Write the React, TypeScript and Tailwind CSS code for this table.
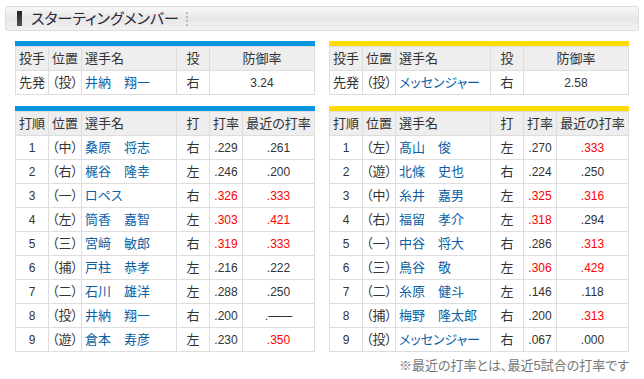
import React from "react";

type Batter = {
  order: number;
  pos: string;
  name: string;
  hand: string;
  avg: string;
  avgHot: boolean;
  recent: string;
  recentHot: boolean;
};

const baystars: Batter[] = [
  { order: 1, pos: "（中）", name: "桑原　将志", hand: "右", avg: ".229", avgHot: false, recent: ".261", recentHot: false },
  { order: 2, pos: "（右）", name: "梶谷　隆幸", hand: "左", avg: ".246", avgHot: false, recent: ".200", recentHot: false },
  { order: 3, pos: "（一）", name: "ロペス", hand: "右", avg: ".326", avgHot: true, recent: ".333", recentHot: true },
  { order: 4, pos: "（左）", name: "筒香　嘉智", hand: "左", avg: ".303", avgHot: true, recent: ".421", recentHot: true },
  { order: 5, pos: "（三）", name: "宮﨑　敏郎", hand: "右", avg: ".319", avgHot: true, recent: ".333", recentHot: true },
  { order: 6, pos: "（捕）", name: "戸柱　恭孝", hand: "左", avg: ".216", avgHot: false, recent: ".222", recentHot: false },
  { order: 7, pos: "（二）", name: "石川　雄洋", hand: "左", avg: ".288", avgHot: false, recent: ".250", recentHot: false },
  { order: 8, pos: "（投）", name: "井納　翔一", hand: "右", avg: ".200", avgHot: false, recent: ".――", recentHot: false },
  { order: 9, pos: "（遊）", name: "倉本　寿彦", hand: "左", avg: ".230", avgHot: false, recent: ".350", recentHot: true },
];

const tigers: Batter[] = [
  { order: 1, pos: "（左）", name: "髙山　俊", hand: "左", avg: ".270", avgHot: false, recent: ".333", recentHot: true },
  { order: 2, pos: "（遊）", name: "北條　史也", hand: "右", avg: ".224", avgHot: false, recent: ".250", recentHot: false },
  { order: 3, pos: "（中）", name: "糸井　嘉男", hand: "左", avg: ".325", avgHot: true, recent: ".316", recentHot: true },
  { order: 4, pos: "（右）", name: "福留　孝介", hand: "左", avg: ".318", avgHot: true, recent: ".294", recentHot: false },
  { order: 5, pos: "（一）", name: "中谷　将大", hand: "右", avg: ".286", avgHot: false, recent: ".313", recentHot: true },
  { order: 6, pos: "（三）", name: "鳥谷　敬", hand: "左", avg: ".306", avgHot: true, recent: ".429", recentHot: true },
  { order: 7, pos: "（二）", name: "糸原　健斗", hand: "左", avg: ".146", avgHot: false, recent: ".118", recentHot: false },
  { order: 8, pos: "（捕）", name: "梅野　隆太郎", hand: "右", avg: ".200", avgHot: false, recent: ".313", recentHot: true },
  { order: 9, pos: "（投）", name: "メッセンジャー", hand: "右", avg: ".067", avgHot: false, recent: ".000", recentHot: false },
];

const th = "border border-[#dddddd] bg-[#eeeeee] font-normal h-[24px] p-0";
const td = "border border-[#dddddd] h-[24px] p-0";

function Cols() {
  return (
    <colgroup>
      <col className="w-[33px]" />
      <col className="w-[33px]" />
      <col className="w-[95px]" />
      <col className="w-[33px]" />
      <col className="w-[33px]" />
      <col />
    </colgroup>
  );
}

function PitcherTable({ bar, name, era }: { bar: string; name: string; era: string }) {
  return (
    <div>
      <div className={`h-[5px] ${bar}`} />
      <table className="w-full table-fixed border-collapse">
        <colgroup>
          <col className="w-[33px]" />
          <col className="w-[33px]" />
          <col className="w-[95px]" />
          <col className="w-[33px]" />
          <col />
        </colgroup>
        <thead>
          <tr>
            <th className={`${th} text-left pl-[3px]`}>投手</th>
            <th className={`${th} text-left pl-[3px]`}>位置</th>
            <th className={`${th} text-left pl-[3px]`}>選手名</th>
            <th className={`${th} text-center`}>投</th>
            <th className={`${th} text-center`}>防御率</th>
          </tr>
        </thead>
        <tbody>
          <tr>
            <td className={`${td} pl-[3px]`}>先発</td>
            <td className={`${td} pl-[3px]`}>（投）</td>
            <td className={`${td} pl-[3px] text-[#0b5fa5]`}>{name}</td>
            <td className={`${td} text-center`}>右</td>
            <td className={`${td} text-center text-[12px]`}>{era}</td>
          </tr>
        </tbody>
      </table>
    </div>
  );
}

function LineupTable({ bar, rows }: { bar: string; rows: Batter[] }) {
  return (
    <div>
      <div className={`h-[5px] ${bar}`} />
      <table className="w-full table-fixed border-collapse">
        <Cols />
        <thead>
          <tr>
            <th className={`${th} text-center`}>打順</th>
            <th className={`${th} text-left pl-[3px]`}>位置</th>
            <th className={`${th} text-left pl-[3px]`}>選手名</th>
            <th className={`${th} text-center`}>打</th>
            <th className={`${th} text-center`}>打率</th>
            <th className={`${th} text-center`}>最近の打率</th>
          </tr>
        </thead>
        <tbody>
          {rows.map(r => (
            <tr key={r.order}>
              <td className={`${td} text-center text-[12px]`}>{r.order}</td>
              <td className={`${td} pl-[3px]`}>{r.pos}</td>
              <td className={`${td} pl-[3px] text-[#0b5fa5]`}>{r.name}</td>
              <td className={`${td} text-center`}>{r.hand}</td>
              <td className={`${td} text-center text-[12px] ${r.avgHot ? "text-[#ff0000]" : ""}`}>{r.avg}</td>
              <td className={`${td} text-center text-[12px] ${r.recentHot ? "text-[#ff0000]" : ""}`}>{r.recent}</td>
            </tr>
          ))}
        </tbody>
      </table>
    </div>
  );
}

export default function App() {
  return (
    <div className="w-[644px] h-[379px] bg-white text-[#333333] text-[13px] leading-none font-['Liberation_Sans','Noto_Sans_CJK_JP',sans-serif] [font-feature-settings:'palt'] pt-[6px]">
      <div className="mx-[5px] h-[25px] border border-[#dddddd] rounded-[2px] bg-gradient-to-b from-[#f8f8f8] via-[#e6e6e6] to-[#f2f2f2] flex items-center pl-[11px]">
        <div className="w-[5px] h-[15px] bg-gradient-to-b from-[#222222] to-[#555555]" />
        <span className="ml-[9px] text-[15px] text-[#2a2438]">スターティングメンバー</span>
        <span className="ml-[7px] h-[14px] border-l-2 border-dotted border-[#bbbbbb]" />
      </div>

      <div className="px-[15px] mt-[10px] grid grid-cols-2 gap-x-[14px] gap-y-[11px]">
        <PitcherTable bar="bg-[#0897dd]" name="井納　翔一" era="3.24" />
        <PitcherTable bar="bg-[#ffdb00]" name="メッセンジャー" era="2.58" />
        <LineupTable bar="bg-[#0897dd]" rows={baystars} />
        <LineupTable bar="bg-[#ffdb00]" rows={tigers} />
      </div>

      <p className="px-[15px] mt-[7px] text-right text-[13px] text-[#777777]">※最近の打率とは、最近5試合の打率です</p>
    </div>
  );
}
